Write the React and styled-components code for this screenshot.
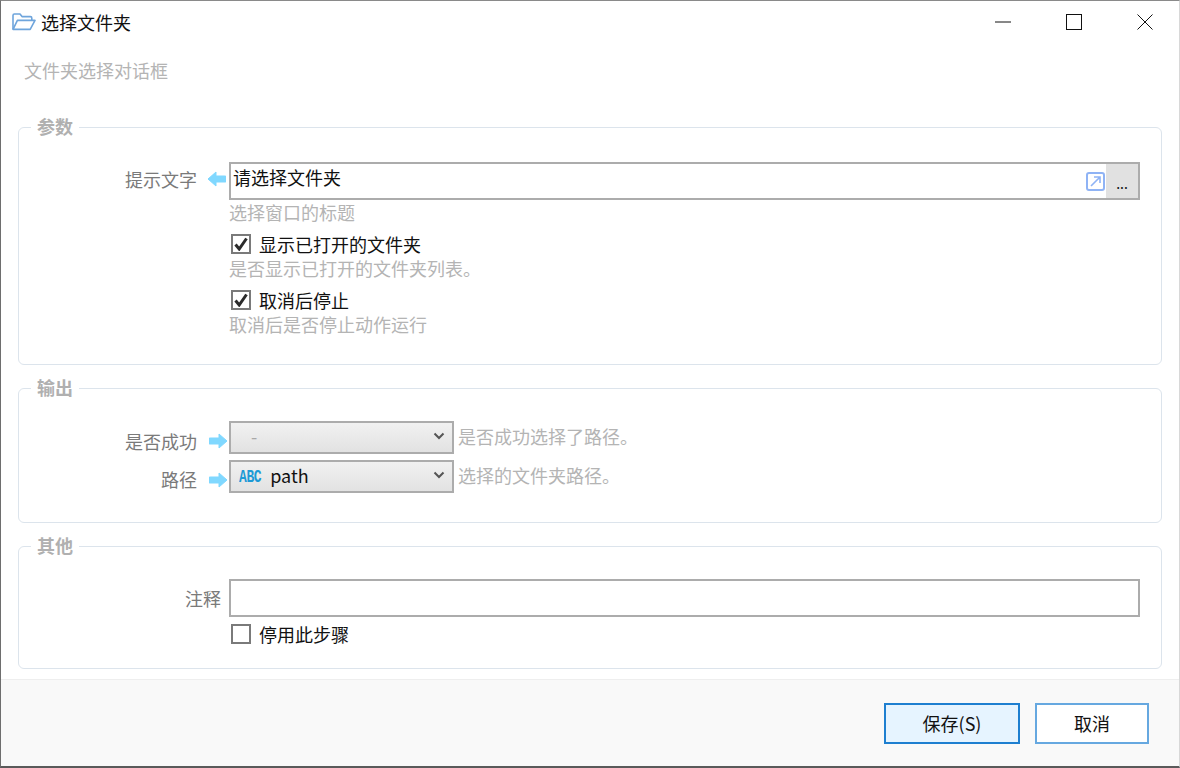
import styled, {createGlobalStyle} from 'styled-components'

const Global = createGlobalStyle`
  html, body { margin: 0; padding: 0; background: #fff; }
  body {
    font-family: "Noto Sans CJK SC", "Noto Sans", sans-serif;
    font-size: 18px;
    color: #111;
  }
`

const Window = styled.div`
  box-sizing: border-box;
  width: 1180px;
  height: 768px;
  display: flex;
  flex-direction: column;
  background: #fff;
  border-top: 1px solid #8a8a8a;
  border-left: 1px solid #6e6e6e;
  border-right: 1px solid #d8d8d8;
  border-bottom: 2px solid #5a5a5a;
  overflow: hidden;
`

const TitleBar = styled.div`
  display: flex;
  align-items: center;
  height: 42px;
  padding-left: 11px;
  flex: none;
`

const TitleText = styled.div`
  margin-left: 5px;
  font-size: 18px;
  line-height: 24px;
  flex: 1;
`

const WinButtons = styled.div`
  display: flex;
  align-items: center;
  margin-right: -1px;
`

const WinButton = styled.div`
  width: 71px;
  height: 42px;
  display: flex;
  align-items: center;
  justify-content: center;
`

const Subtitle = styled.div`
  color: #b4b4b4;
  font-size: 18px;
  line-height: 24px;
  padding: 15px 0 0 23px;
  flex: none;
`

const Content = styled.div`
  flex: 1;
  padding: 32px 17px 0;
  display: flex;
  flex-direction: column;
  gap: 10px;
`

const Section = styled.fieldset`
  margin: 0;
  padding: ${p => p.$top}px 21px 0 0;
  height: ${p => p.$height}px;
  box-sizing: border-box;
  border: 1.5px solid #dce4ec;
  border-radius: 6px;
  min-width: 0;
`

const Legend = styled.legend`
  margin-left: 12px;
  padding: 0 6px 2px;
  font-size: 18px;
  font-weight: 700;
  line-height: 24px;
  color: #b0b0b0;
`

const Row = styled.div`
  display: grid;
  grid-template-columns: 179px 31px 1fr;
  align-items: center;
  margin-bottom: ${p => p.$gap || 0}px;
`

const Label = styled.div`
  text-align: right;
  color: #7a7a7a;
  line-height: 24px;
  padding-right: ${p => (p.$wide ? 8 : 1)}px;
  margin-top: ${p => p.$nudge || 0}px;
  grid-column: ${p => (p.$wide ? '1 / 3' : 'auto')};
`

const ArrowCell = styled.div`
  display: flex;
  justify-content: flex-end;
  padding-right: ${p => p.$inset}px;
  margin-top: ${p => p.$nudge || 0}px;
`

const FieldBox = styled.div`
  box-sizing: border-box;
  height: 38px;
  border: 2px solid #acacac;
  display: flex;
  background: #fff;
`

const FieldText = styled.div`
  flex: 1;
  padding-left: 2px;
  line-height: 24px;
  margin-top: 1px;
`

const LinkCell = styled.div`
  width: 22px;
  display: flex;
  align-items: center;
  justify-content: center;
`

const MoreButton = styled.div`
  width: 32px;
  background: #e1e1e1;
  display: flex;
  align-items: center;
  justify-content: center;
  font-size: 14px;
  line-height: 1;
  padding-top: 3px;
  box-sizing: border-box;
`

const Hint = styled.div`
  color: #b4b4b4;
  line-height: 24px;
  height: ${p => p.$h || 24}px;
  margin-left: 210px;
`

const CheckRow = styled.div`
  display: flex;
  align-items: center;
  height: ${p => p.$h || 24}px;
  margin-left: 212px;
  gap: 8px;
  line-height: 24px;
`

const CheckBox = styled.div`
  box-sizing: border-box;
  width: 20px;
  height: 20px;
  border: 2px solid #7a7a7a;
  background: #fff;
  display: flex;
  align-items: center;
  justify-content: center;
`

const SelectLine = styled.div`
  display: flex;
  align-items: center;
  gap: 4px;
`

const Select = styled.div`
  box-sizing: border-box;
  width: 225px;
  height: 33px;
  border: 2px solid #acacac;
  background: linear-gradient(#f1f1f1, #e2e2e2);
  display: flex;
  align-items: center;
  padding: 0 7px 3px 8px;
  color: ${p => (p.$disabled ? '#a8a8a8' : '#111')};
`

const SelectValue = styled.div`
  flex: 1;
  display: flex;
  align-items: center;
  gap: 9px;
  line-height: 24px;
  padding-left: ${p => p.$indent || 0}px;
`

const TypeTag = styled.span`
  font-family: "Liberation Mono", monospace;
  font-weight: 700;
  font-size: 13px;
  color: #1e9ad6;
  letter-spacing: -0.4px;
  margin-top: 6px;
  transform: scaleY(1.35);
`

const SelectHint = styled.span`
  color: #b4b4b4;
  line-height: 24px;
  margin-bottom: 4px;
`

const Footer = styled.div`
  flex: none;
  height: 87px;
  box-sizing: border-box;
  margin-top: 10px;
  border-top: 1px solid #eeeeee;
  background: #f9f9f9;
  display: flex;
  justify-content: flex-end;
  align-items: flex-start;
  gap: 15px;
  padding: 23px 30px 0 0;
`

const Button = styled.div`
  box-sizing: border-box;
  width: ${p => p.$w}px;
  height: 41px;
  padding-bottom: 2px;
  display: flex;
  align-items: center;
  justify-content: center;
  border: ${p => (p.$primary ? '2px solid #1e7fd0' : '2px solid #66a8e0')};
  background: ${p => (p.$primary ? '#e6f4ff' : '#fff')};
  font-size: 18px;
`

const FolderIcon = () => (
  <svg width="24" height="18" viewBox="0 0 24 18" fill="none" stroke="#6fa5dc" strokeWidth="1.6" strokeLinejoin="round">
    <path d="M1 16V2.5C1 1.7 1.6 1 2.4 1H8l2 2.6h8.4c.8 0 1.4.6 1.4 1.4v2" />
    <path d="M1 16.4h17.2L23 7.4H5.4L1 16.4z" />
  </svg>
)

const Arrow = ({left}) => (
  <svg width="19" height="16" viewBox="0 0 19 16" style={left ? {transform: 'scaleX(-1)'} : undefined}>
    <path d="M1.5 8h9" stroke="#80d8ff" strokeWidth="7" strokeLinecap="round" />
    <path d="M10 1l8 7-8 7z" fill="#80d8ff" stroke="#80d8ff" strokeLinejoin="round" />
  </svg>
)

const Chevron = () => (
  <svg width="12" height="8" viewBox="0 0 12 8" fill="none" stroke="#555" strokeWidth="2">
    <path d="M1.5 1.5L6 6l4.5-4.5" />
  </svg>
)

const Check = () => (
  <svg width="14" height="14" viewBox="0 0 14 14" fill="none" stroke="#2b2b2b" strokeWidth="3">
    <path d="M1.5 7.5L5.2 12 12.5 1.5" />
  </svg>
)

const LinkIcon = () => (
  <svg width="19" height="19" viewBox="0 0 19 19" fill="none" stroke="#8fb3f5" strokeWidth="1.6">
    <rect x="1" y="1" width="17" height="17" rx="2" strokeWidth="2" />
    <path d="M5 14L14 5M8 5h6v6" />
  </svg>
)

const CheckField = ({checked, children, h}) => (
  <CheckRow $h={h}>
    <CheckBox>{checked && <Check />}</CheckBox>
    <span>{children}</span>
  </CheckRow>
)

export default function App() {
  return <Window>
    <Global />
    <TitleBar>
      <FolderIcon />
      <TitleText>选择文件夹</TitleText>
      <WinButtons>
        <WinButton>
          <svg width="16" height="2" viewBox="0 0 16 2"><path d="M0 1h16" stroke="#111" /></svg>
        </WinButton>
        <WinButton>
          <svg width="16" height="16" viewBox="0 0 16 16" fill="none"><rect x=".5" y=".5" width="15" height="15" stroke="#111" /></svg>
        </WinButton>
        <WinButton>
          <svg width="16" height="16" viewBox="0 0 16 16" fill="none"><path d="M.5.5l15 15M15.5.5l-15 15" stroke="#111" /></svg>
        </WinButton>
      </WinButtons>
    </TitleBar>
    <Subtitle>文件夹选择对话框</Subtitle>
    <Content>
      <Section $top={22} $height={251}>
        <Legend>参数</Legend>
        <Row>
          <Label $nudge={-4}>提示文字</Label>
          <ArrowCell $nudge={-4} $inset={3}><Arrow left /></ArrowCell>
          <FieldBox>
            <FieldText>请选择文件夹</FieldText>
            <LinkCell><LinkIcon /></LinkCell>
            <MoreButton>...</MoreButton>
          </FieldBox>
        </Row>
        <Hint $h={32}>选择窗口的标题</Hint>
        <CheckField checked>显示已打开的文件夹</CheckField>
        <Hint $h={32}>是否显示已打开的文件夹列表。</Hint>
        <CheckField checked>取消后停止</CheckField>
        <Hint>取消后是否停止动作运行</Hint>
      </Section>
      <Section $top={20} $height={148}>
        <Legend>输出</Legend>
        <Row $gap={6}>
          <Label $nudge={6}>是否成功</Label>
          <ArrowCell $nudge={6} $inset={1}><Arrow /></ArrowCell>
          <SelectLine>
            <Select $disabled>
              <SelectValue $indent={12}>-</SelectValue>
              <Chevron />
            </Select>
            <SelectHint>是否成功选择了路径。</SelectHint>
          </SelectLine>
        </Row>
        <Row>
          <Label $nudge={4}>路径</Label>
          <ArrowCell $nudge={6} $inset={1}><Arrow /></ArrowCell>
          <SelectLine>
            <Select>
              <SelectValue><TypeTag>ABC</TypeTag>path</SelectValue>
              <Chevron />
            </Select>
            <SelectHint>选择的文件夹路径。</SelectHint>
          </SelectLine>
        </Row>
      </Section>
      <Section $top={20} $height={136}>
        <Legend>其他</Legend>
        <Row $gap={5}>
          <Label $wide>注释</Label>
          <FieldBox />
        </Row>
        <CheckField>停用此步骤</CheckField>
      </Section>
    </Content>
    <Footer>
      <Button $primary $w={136}>保存(S)</Button>
      <Button $w={114}>取消</Button>
    </Footer>
  </Window>
}
